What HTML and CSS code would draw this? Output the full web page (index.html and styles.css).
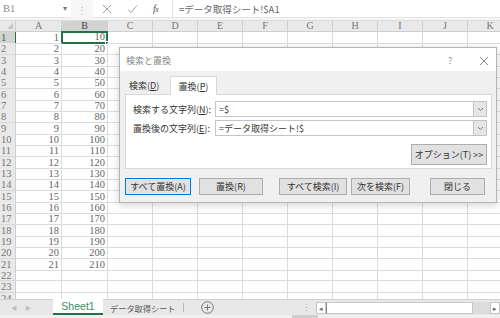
FILE: index.html
```html
<!DOCTYPE html>
<html lang="ja">
<head>
<meta charset="utf-8">
<title>検索と置換</title>
<link rel="stylesheet" href="styles.css">
</head>
<body>
<div class="app">
  <div class="fbar">
    <div class="namebox"><span>B1</span><span class="dd">▾</span></div>
    <div class="grip">⋮</div>
    <div class="fbtns">
      <svg class="ico" width="10" height="10" viewBox="0 0 10 10"><path d="M1 1L9 9M9 1L1 9" stroke="#a0a0a0" stroke-width="1" fill="none"/></svg>
      <svg class="ico" width="11" height="10" viewBox="0 0 11 10"><path d="M1 5.5L4 8.5L10 1.5" stroke="#a0a0a0" stroke-width="1" fill="none"/></svg>
      <span class="fx">f<i>x</i></span>
    </div>
    <div class="finput">=データ取得シート!$A1</div>
  </div>

  <div class="sheet">
    <div class="row hdr">
      <div class="corner"><span class="tri"></span></div>
      <div class="ch">A</div><div class="ch sel">B</div><div class="ch">C</div><div class="ch">D</div><div class="ch">E</div><div class="ch">F</div><div class="ch">G</div><div class="ch">H</div><div class="ch">I</div><div class="ch">J</div><div class="ch">K</div>
    </div>
    <div class="row"><div class="rh sel">1</div><div class="c">1</div><div class="c active">10<span class="handle"></span></div><div class="rest"></div></div>
    <div class="row"><div class="rh">2</div><div class="c">2</div><div class="c">20</div><div class="rest"></div></div>
    <div class="row"><div class="rh">3</div><div class="c">3</div><div class="c">30</div><div class="rest"></div></div>
    <div class="row"><div class="rh">4</div><div class="c">4</div><div class="c">40</div><div class="rest"></div></div>
    <div class="row"><div class="rh">5</div><div class="c">5</div><div class="c">50</div><div class="rest"></div></div>
    <div class="row"><div class="rh">6</div><div class="c">6</div><div class="c">60</div><div class="rest"></div></div>
    <div class="row"><div class="rh">7</div><div class="c">7</div><div class="c">70</div><div class="rest"></div></div>
    <div class="row"><div class="rh">8</div><div class="c">8</div><div class="c">80</div><div class="rest"></div></div>
    <div class="row"><div class="rh">9</div><div class="c">9</div><div class="c">90</div><div class="rest"></div></div>
    <div class="row"><div class="rh">10</div><div class="c">10</div><div class="c">100</div><div class="rest"></div></div>
    <div class="row"><div class="rh">11</div><div class="c">11</div><div class="c">110</div><div class="rest"></div></div>
    <div class="row"><div class="rh">12</div><div class="c">12</div><div class="c">120</div><div class="rest"></div></div>
    <div class="row"><div class="rh">13</div><div class="c">13</div><div class="c">130</div><div class="rest"></div></div>
    <div class="row"><div class="rh">14</div><div class="c">14</div><div class="c">140</div><div class="rest"></div></div>
    <div class="row"><div class="rh">15</div><div class="c">15</div><div class="c">150</div><div class="rest"></div></div>
    <div class="row"><div class="rh">16</div><div class="c">16</div><div class="c">160</div><div class="rest"></div></div>
    <div class="row"><div class="rh">17</div><div class="c">17</div><div class="c">170</div><div class="rest"></div></div>
    <div class="row"><div class="rh">18</div><div class="c">18</div><div class="c">180</div><div class="rest"></div></div>
    <div class="row"><div class="rh">19</div><div class="c">19</div><div class="c">190</div><div class="rest"></div></div>
    <div class="row"><div class="rh">20</div><div class="c">20</div><div class="c">200</div><div class="rest"></div></div>
    <div class="row"><div class="rh">21</div><div class="c">21</div><div class="c">210</div><div class="rest"></div></div>
    <div class="row"><div class="rh">22</div><div class="c"></div><div class="c"></div><div class="rest"></div></div>
    <div class="row"><div class="rh">23</div><div class="c"></div><div class="c"></div><div class="rest"></div></div>
    <div class="row"><div class="rh">24</div><div class="c"></div><div class="c"></div><div class="rest"></div></div>
  </div>

  <div class="tabbar">
    <div class="navs"><span>◀</span><span>▶</span></div>
    <div class="tab active">Sheet1</div>
    <div class="tab second">データ取得シート</div>
    <div class="tabsep"></div>
    <div class="add">
      <svg width="13" height="13" viewBox="0 0 13 13"><circle cx="6.5" cy="6.5" r="5.8" stroke="#777" stroke-width="1" fill="none"/><path d="M6.5 3.5V9.5M3.5 6.5H9.5" stroke="#777" stroke-width="1"/></svg>
    </div>
    <div class="hgrip">⋮</div>
    <div class="hscroll">
      <div class="sbtn">◂</div>
      <div class="strack"></div>
      <div class="sgap"></div>
      <div class="sbtn">▸</div>
    </div>
  </div>
  <div class="status"><span class="thumb"></span></div>

  <div class="dialog">
    <div class="dtitle">
      <span class="dname">検索と置換</span>
      <span class="dq">?</span>
      <svg class="dclose" width="10" height="10" viewBox="0 0 10 10"><path d="M1 1L9 9M9 1L1 9" stroke="#888" stroke-width="1" fill="none"/></svg>
    </div>
    <div class="dbody">
      <div class="dtabs">
        <div class="dtab">検索(<u>D</u>)</div>
        <div class="dtab on">置換(<u>P</u>)</div>
      </div>
      <div class="panel">
        <div class="frow">
          <label>検索する文字列(<u>N</u>):</label>
          <div class="combo"><span class="val">=$</span><span class="cbtn"><svg width="7" height="5" viewBox="0 0 7 5"><path d="M1 1L3.5 3.5L6 1" stroke="#777" fill="none"/></svg></span></div>
        </div>
        <div class="frow">
          <label>置換後の文字列(<u>E</u>):</label>
          <div class="combo"><span class="val">=データ取得シート!$</span><span class="cbtn"><svg width="7" height="5" viewBox="0 0 7 5"><path d="M1 1L3.5 3.5L6 1" stroke="#777" fill="none"/></svg></span></div>
        </div>
        <div class="orow"><button class="btn opt">オプション(T) &gt;&gt;</button></div>
      </div>
      <div class="brow">
        <button class="btn b1 focus">すべて置換(A)</button>
        <button class="btn b2">置換(R)</button>
        <button class="btn b3">すべて検索(I)</button>
        <button class="btn b4">次を検索(F)</button>
        <button class="btn b5">閉じる</button>
      </div>
    </div>
  </div>
</div>
</body>
</html>
```

FILE: styles.css
```css
* { box-sizing: border-box; margin: 0; padding: 0; }
html, body { width: 500px; height: 318px; overflow: hidden; background: #fff; }
body { font-family: "Noto Sans CJK JP", "Noto Sans", sans-serif; color: #333; }

.app { position: relative; width: 500px; height: 318px; overflow: hidden; display: flex; flex-direction: column; }

/* formula bar */
.fbar { height: 21px; flex: none; display: flex; align-items: flex-start; background: #f6f6f6; border-bottom: 1px solid #dcdcdc; }
.namebox { width: 71px; height: 18px; background: #fff; border-bottom: 1px solid #e4e4e4; display: flex; align-items: center; justify-content: space-between; padding: 0 4px 0 3px; font: 10.5px "Liberation Serif", serif; color: #888; }
.namebox .dd { font-size: 8px; color: #777; }
.grip { width: 22px; height: 18px; display: flex; align-items: center; justify-content: center; font-size: 10px; color: #aaa; }
.fbtns { width: 79px; height: 18px; background: #fff; border-bottom: 1px solid #e4e4e4; display: flex; align-items: center; padding-left: 9px; gap: 15px; }
.fx { font: italic 10px "Liberation Serif", serif; color: #555; letter-spacing: -0.5px; }
.fx i { font-size: 8px; }
.finput { flex: 1; height: 18px; background: #fff; border-left: 1px solid #e4e4e4; border-bottom: 1px solid #e4e4e4; padding-left: 6px; display: flex; align-items: center; font-size: 9.5px; color: #666; }

/* sheet */
.sheet { height: 278px; flex: none; overflow: hidden; }
.row { display: grid; grid-template-columns: 16px 46px 46px 1fr; height: 11.33px; }
.row.hdr { grid-template-columns: 16px 46px 46px repeat(9, 45px); height: 11px; background: #e9e9e9; }
.corner { position: relative; border-right: 1px solid #cfcfcf; border-bottom: 1px solid #cfcfcf; }
.tri { position: absolute; right: 2px; bottom: 2px; width: 0; height: 0; border-left: 6px solid transparent; border-bottom: 6px solid #c6c6c6; }
.ch { border-right: 1px solid #cfcfcf; border-bottom: 1px solid #cfcfcf; font: 10px "Liberation Serif", serif; color: #777; text-align: center; line-height: 10px; }
.ch.sel { background: #d2d2d2; border-bottom: 1px solid #217346; color: #444; }
.rh { background: #e9e9e9; border-right: 1px solid #cfcfcf; border-bottom: 1px solid #d8d8d8; font: 10.5px "Liberation Serif", serif; color: #777; padding-left: 1px; line-height: 11px; overflow: hidden; }
.rh.sel { background: #d2d2d2; border-right: 1px solid #217346; color: #217346; }
.c { position: relative; border-right: 1px solid #dcdcdc; border-bottom: 1px solid #dcdcdc; font: 10.5px "Liberation Serif", serif; color: #666; text-align: right; padding-right: 2px; line-height: 11px; }
.c.active { border: 2px solid #217346; margin: -1px 0 0 -1px; line-height: 8px; padding-right: 1px; }
.handle { position: absolute; right: -3px; bottom: -3px; width: 4px; height: 4px; background: #217346; border: 1px solid #fff; }
.rest { border-bottom: 1px solid #dcdcdc; background: repeating-linear-gradient(to right, transparent 0 44px, #dcdcdc 44px 45px); }

/* tab bar */
.tabbar { height: 16px; flex: none; display: flex; align-items: stretch; background: #e8e8e8; border-top: 1px solid #d0d0d0; }
.navs { width: 53px; flex: none; display: flex; align-items: center; gap: 8px; padding-left: 11px; font-size: 6px; color: #c0c0c0; }
.tab { display: flex; align-items: center; flex: none; color: #555; }
.tab.active { width: 50px; justify-content: center; background: #fff; color: #3a8a5e; border-bottom: 2px solid #217346; margin-top: -1px; font: 10.5px "Liberation Sans", sans-serif; }
.tab.second { width: 80px; padding-left: 7px; font-size: 8.2px; white-space: nowrap; }
.tabsep { width: 1px; flex: none; margin: 3px 0; background: #b8b8b8; }
.add { width: 46px; flex: none; display: flex; align-items: center; justify-content: center; }
.hgrip { width: 12px; flex: none; display: flex; align-items: center; justify-content: center; font-size: 9px; color: #aaa; margin-left: 70px; }
.hscroll { flex: none; width: 184px; margin-left: 4px; display: flex; align-items: center; }
.sbtn { width: 10px; height: 12px; background: #fff; border: 1px solid #c6c6c6; font-size: 7px; color: #666; display: flex; align-items: center; justify-content: center; }
.strack { width: 147px; height: 12px; background: #fff; border: 1px solid #c6c6c6; border-left: 1px solid #888; }
.sgap { width: 17px; height: 12px; background: #dcdcdc; }
.status { height: 3px; flex: none; background: #f0f0f0; position: relative; }
.thumb { position: absolute; left: 292px; width: 26px; top: 0; height: 3px; background: #cfcfcf; }

/* dialog */
.dialog { position: absolute; left: 119px; top: 47px; width: 378px; height: 156px; background: #f0f0f0; border: 1px solid #b5b5b5; box-shadow: 0 2px 8px rgba(0,0,0,0.18); display: flex; flex-direction: column; font-size: 9px; color: #333; }
.dtitle { height: 23px; flex: none; background: #fff; position: relative; display: flex; align-items: center; padding-left: 6px; padding-top: 2px; }
.dname { color: #888; font-size: 9px; }
.dq { position: absolute; left: 328px; top: 6px; color: #999; font-size: 9px; }
.dclose { position: absolute; left: 359px; top: 8px; }
.dbody { flex: 1; padding: 5px 4px 0 5px; display: flex; flex-direction: column; }
.dtabs { height: 18px; display: flex; align-items: stretch; padding-left: 1px; }
.dtab { display: flex; align-items: center; padding: 0 6px 0 3px; width: 44px; }
.dtab.on { width: 47px; background: #fff; border: 1px solid #d9d9d9; border-bottom: none; justify-content: center; padding: 0; margin-bottom: -1px; position: relative; z-index: 1; }
.panel { height: 75px; background: #fff; border: 1px solid #d9d9d9; padding: 6px 4px 0 7px; display: flex; flex-direction: column; gap: 3px; }
.frow { display: flex; align-items: center; height: 16px; }
.frow label { width: 82px; flex: none; }
.combo { flex: 1; height: 16px; border: 1px solid #c4c4c4; display: flex; align-items: stretch; }
.combo .val { flex: 1; padding-left: 3px; display: flex; align-items: center; }
.cbtn { width: 13px; background: #e6e6e6; border-left: 1px solid #c4c4c4; display: flex; align-items: center; justify-content: center; }
.orow { display: flex; justify-content: flex-end; margin-top: 5px; }
.btn { font-family: inherit; font-size: 9px; color: #333; background: #e1e1e1; border: 1px solid #adadad; height: 17px; display: flex; align-items: center; justify-content: center; }
.btn.opt { width: 76px; height: 21px; }
.btn.focus { border: 1px solid #0078d7; box-shadow: inset 0 0 0 1px #d7e8f8; }
.brow { display: flex; margin-top: 9px; }
.b1 { width: 66px; }
.b2 { width: 64px; margin-left: 8px; }
.b3 { width: 68px; margin-left: 16px; }
.b4 { width: 59px; margin-left: 4px; }
.b5 { width: 55px; margin-left: 20px; }
u { text-decoration: underline; }
```
